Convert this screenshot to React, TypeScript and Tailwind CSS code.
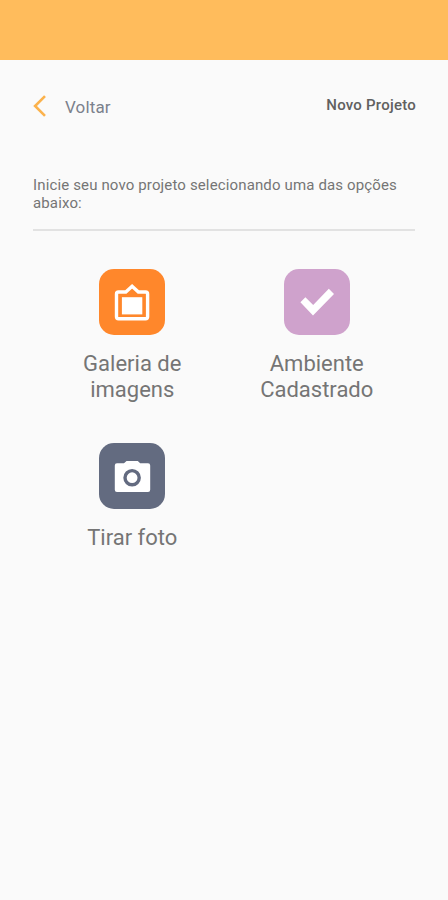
import React from 'react';

function BackIcon() {
  return (
    <svg className="w-[13px] h-[22px]" viewBox="0 0 13 22" fill="none" stroke="#fbb24c" strokeWidth="2.6">
      <path d="M12 1.2 L2.1 11 L12 20.8" />
    </svg>
  );
}

function FrameIcon() {
  return (
    <svg className="w-full h-full" viewBox="0 0 66 66" fill="none">
      <path
        d="M19.5 23 H26.8 L33.1 17.2 L39.4 23 H46.6 Q48.6 23 48.6 25 V47.8 Q48.6 49.8 46.6 49.8 H19.5 Q17.5 49.8 17.5 47.8 V25 Q17.5 23 19.5 23 Z"
        stroke="#fff"
        strokeWidth="3.4"
      />
      <rect x="22.9" y="28.2" width="20.4" height="17.2" fill="#fff" />
    </svg>
  );
}

function CheckIcon() {
  return (
    <svg className="w-full h-full" viewBox="0 0 66 66">
      <path d="M16.4 33.3 L21.4 28.2 L29.2 36 L44.8 19.7 L50 25 L29 46.5 Z" fill="#fff" />
    </svg>
  );
}

function CameraIcon() {
  return (
    <svg className="w-full h-full" viewBox="0 0 66 66">
      <path
        d="M18 20.3 H25 L27.5 18 H38.8 L41.2 20.3 H49 Q51.2 20.3 51.2 22.5 V46.8 Q51.2 49 49 49 H18 Q15.8 49 15.8 46.8 V22.5 Q15.8 20.3 18 20.3 Z"
        fill="#fff"
      />
      <circle cx="33.1" cy="34.7" r="7.1" fill="#fff" stroke="#636b80" strokeWidth="3.4" />
    </svg>
  );
}

const options = [
  { label: 'Galeria de imagens', color: 'bg-[#ff872b]', icon: <FrameIcon /> },
  { label: 'Ambiente Cadastrado', color: 'bg-[#cfa2cc]', icon: <CheckIcon /> },
  { label: 'Tirar foto', color: 'bg-[#636b80]', icon: <CameraIcon /> },
];

export default function App() {
  return (
    <div className="min-h-screen bg-[#fafafa] font-['Roboto',sans-serif] text-[#757575]">
      <div className="h-[60px] bg-[#ffbc5c]" />

      <header className="flex items-start justify-between px-[33px] pt-[35px]">
        <button className="flex items-start gap-[19px] text-[#7b818c]">
          <BackIcon />
          <span className="pt-px text-[17px] leading-[22px] tracking-[0.15px]">Voltar</span>
        </button>
        <h1 className="-mr-px pt-px text-[15px] leading-[18px] font-medium tracking-[0.23px] text-[#606060]">Novo Projeto</h1>
      </header>

      <div className="mx-[33px] mt-[58px] h-[55px] border-b-2 border-[#e2e2e2]">
        <p className="text-[15px] leading-[18px] tracking-[0.14px]">
          Inicie seu novo projeto selecionando uma das opções abaixo:
        </p>
      </div>

      <main className="grid grid-cols-2 gap-y-[40px] pl-[40px] pr-[39px] pt-[38px]">
        {options.map((option) => (
          <button key={option.label} className="flex flex-col items-center">
            <div className={`w-[66px] h-[66px] rounded-[15px] ${option.color}`}>{option.icon}</div>
            <span className="mt-4 w-[120px] text-center text-[22px] leading-[26px]">{option.label}</span>
          </button>
        ))}
      </main>
    </div>
  );
}
